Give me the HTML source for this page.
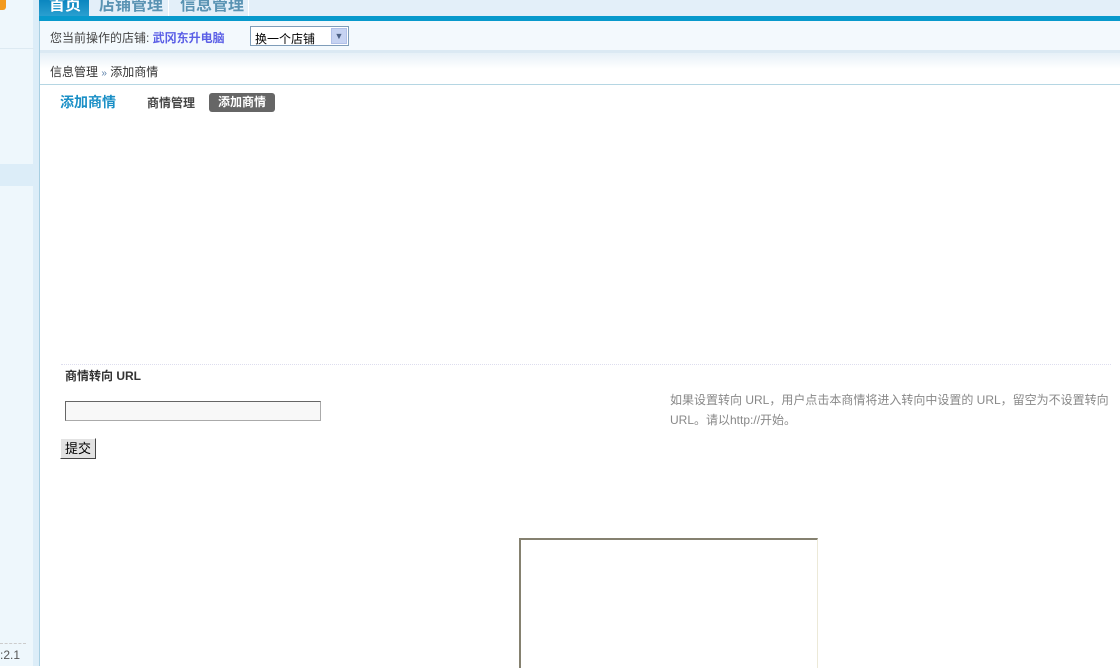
<!DOCTYPE html>
<html><head><meta charset="utf-8"><style>
*{margin:0;padding:0;box-sizing:border-box}
body{width:1120px;height:666px;overflow:hidden;background:#fff;font-family:"Liberation Sans","Noto Sans CJK SC",sans-serif;font-size:12px;color:#333;position:relative}
.abs{position:absolute}
</style></head><body>
<!-- sidebar -->
<div class="abs" style="left:0;top:0;width:34px;height:666px;background:#eef7fc"></div>
<div class="abs" style="left:33px;top:0;width:6px;height:666px;background:#dcedf8"></div>
<div class="abs" style="left:39px;top:16px;width:1px;height:650px;background:#a8cfe2"></div>
<div class="abs" style="left:0;top:0;width:6px;height:10px;background:#f39a1e;border-radius:0 0 3px 0"></div>
<div class="abs" style="left:0;top:48px;width:34px;height:1px;background:#ddeaf2"></div>
<div class="abs" style="left:0;top:164px;width:34px;height:22px;background:#dcedf8"></div>
<div class="abs" style="left:0;top:643px;width:26px;border-top:1px dashed #ccc"></div>
<div class="abs" style="left:0;top:648px;font-size:12px;color:#555">:2.1</div>
<!-- top nav -->
<div class="abs" style="left:39px;top:0;width:1081px;height:16px;background:#e3eff9"></div>
<div class="abs" style="left:39px;top:0;width:50px;height:16px;background:linear-gradient(#0a86bf,#2a9fd0)"></div>
<div class="abs" style="left:49px;top:-9px;font-size:16px;font-weight:bold;color:#fff">首页</div>
<div class="abs" style="left:99px;top:-9px;font-size:16px;font-weight:bold;color:#5a93b3">店铺管理</div>
<div class="abs" style="left:168px;top:0;width:1px;height:16px;background:#fff"></div>
<div class="abs" style="left:180px;top:-9px;font-size:16px;font-weight:bold;color:#5a93b3">信息管理</div>
<div class="abs" style="left:248px;top:0;width:1px;height:16px;background:#fff"></div>
<div class="abs" style="left:39px;top:16px;width:1081px;height:5px;background:#0899cc"></div>
<div class="abs" style="left:40px;top:21px;width:1080px;height:30px;background:#f3f9fd"></div>
<div class="abs" style="left:40px;top:50px;width:1080px;height:3px;background:#dbe9f3"></div>
<div class="abs" style="left:50px;top:29px;color:#444">您当前操作的店铺: <b style="color:#5b5fe6">武冈东升电脑</b></div>
<div class="abs" style="left:250px;top:26px;width:99px;height:20px;border:1px solid #7f9db9;background:#fff;font-size:12px;padding:3px 4px;color:#000">换一个店铺</div>
<div class="abs" style="left:331px;top:28px;width:16px;height:16px;background:#c6d3f2;border:1px solid #b0c0e8;color:#4d6185;font-size:9px;text-align:center;line-height:14px">▼</div>
<div class="abs" style="left:40px;top:53px;width:1080px;height:32px;background:linear-gradient(#e6f0f7,#fff 50%)"></div>
<div class="abs" style="left:50px;top:63px;color:#333">信息管理 <span style="color:#5a7fa8;font-size:10px">»</span> 添加商情</div>
<div class="abs" style="left:40px;top:84px;width:1080px;height:1px;background:#b5d6e3"></div>
<div class="abs" style="left:60px;top:92px;font-size:14px;font-weight:bold;color:#1a8fc6">添加商情</div>
<div class="abs" style="left:147px;top:94px;font-weight:bold;color:#444">商情管理</div>
<div class="abs" style="left:209px;top:93px;width:66px;height:19px;background:#666;border-radius:3px;color:#fff;font-weight:bold;text-align:center;line-height:18px">添加商情</div>
<!-- form -->
<div class="abs" style="left:61px;top:364px;width:1050px;border-top:1px dotted #dde"></div>
<div class="abs" style="left:65px;top:367px;font-weight:bold;color:#333">商情转向 URL</div>
<div class="abs" style="left:65px;top:401px;width:256px;height:20px;border:1px solid #aaa;border-top-color:#666;border-left-color:#666;background:#f8f8f8"></div>
<div class="abs" style="left:60px;top:438px;width:36px;height:21px;background:#e2e2e2;border:1px solid;border-color:#fff #444 #444 #fff;font-size:13px;color:#000;text-align:center;line-height:19px">提交</div>
<div class="abs" style="left:670px;top:390px;width:440px;line-height:20px;color:#888">如果设置转向 URL，用户点击本商情将进入转向中设置的 URL，留空为不设置转向 URL。请以http://开始。</div>
<div class="abs" style="left:519px;top:538px;width:299px;height:130px;border-top:2px solid #858170;border-left:2px solid #858170;border-right:1px solid #ece9d8;background:#fff"></div>
</body></html>
